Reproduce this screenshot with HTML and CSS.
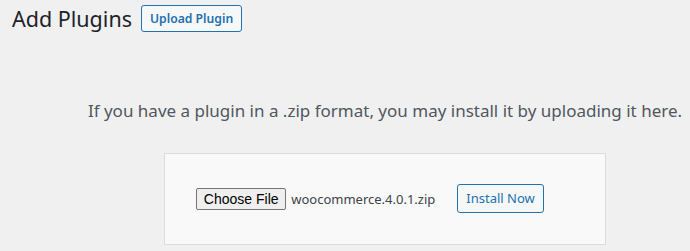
FILE: index.html
```html
<!DOCTYPE html>
<html>
<head>
    <meta charset="UTF-8">
    <title>Add Plugins</title>
    <link rel="stylesheet" href="styles.css">
</head>
<body>

<div class="wrap">
    <div class="page-head">
        <h1>Add Plugins</h1>
        <a href="javascript:;" class="btn-upload">Upload Plugin</a>
    </div>

    <div class="upload-plugin">
        <p class="install-help">If you have a plugin in a .zip format, you may install it by uploading it here.</p>
        <form class="upload-form">
            <div class="file-field">
                <button type="button" class="file-btn">Choose File</button>
                <span class="file-name">woocommerce.4.0.1.zip</span>
            </div>
            <a href="javascript:;" class="btn-install">Install Now</a>
        </form>
    </div>
</div>

</body>
</html>
```

FILE: styles.css
```css
* { margin: 0; padding: 0; box-sizing: border-box; text-decoration: none;}
html, body { overflow: hidden;}
body { background: #f0f0f1; font-family: "Noto Sans", "Open Sans", sans-serif; color: #1d2327;}
.page-head { display: flex; align-items: center; gap: 9px; padding: 4px 0 0 12px;}
.page-head h1 { font-size: 21.5px; font-weight: 400; line-height: 29px; color: #1d2327;}
.btn-upload { display: block; height: 27px; line-height: 25px; padding: 0 8px; font-size: 12.2px; font-weight: 600; color: #2271b1; border: 1px solid #2271b1; border-radius: 3px; background: #f6f7f7;}
.upload-plugin { text-align: center; padding-left: 80px;}
.install-help { padding-top: 65px; font-size: 17px; line-height: 26px; color: #50575e; white-space: nowrap;}
.upload-form { display: inline-flex; align-items: center; margin-top: 29px; padding: 30px 61px 31px 31px; background: #f9f9f9; border: 1px solid #dcdcde;}
.file-field { display: flex; align-items: center; gap: 5px;}
.file-btn { width: 90px; height: 22px; font-family: "Liberation Sans", Arial, sans-serif; font-size: 14px; color: #000; background: #efefef; border: 1px solid #767676; border-radius: 2px;}
.file-name { font-size: 13px; color: #3c434a;}
.btn-install { display: block; margin-left: 22px; height: 29px; line-height: 27px; padding: 0 8px; font-size: 13px; color: #2271b1; border: 1px solid #2271b1; border-radius: 3px; background: #f6f7f7;}
```
